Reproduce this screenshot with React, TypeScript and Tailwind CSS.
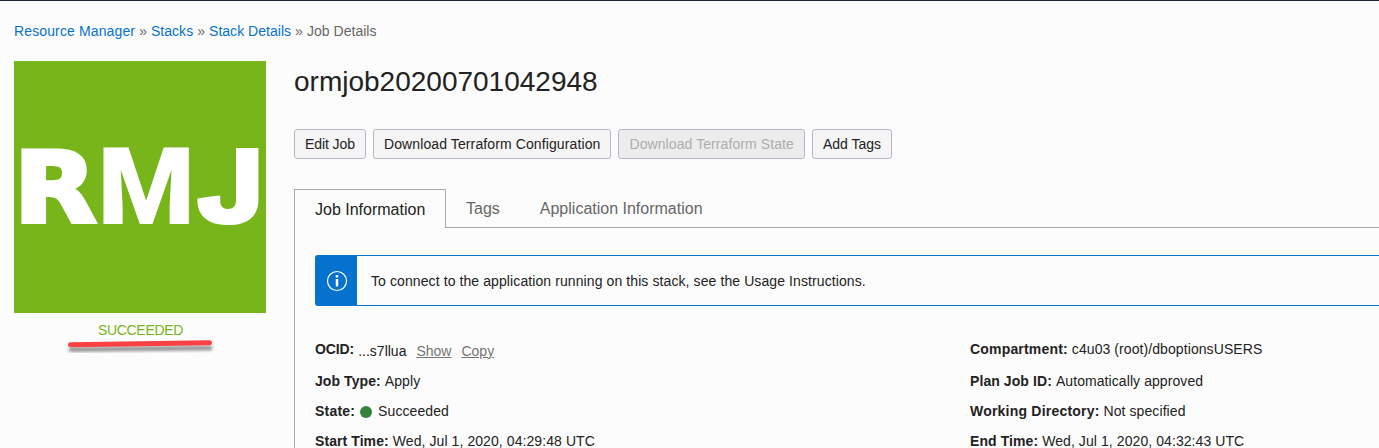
import type { ReactNode } from 'react';

function Crumb({ children }: { children: ReactNode }) {
  return <a className="text-[#0572ce]">{children}</a>;
}

function Button({
  children,
  disabled = false,
  spacing = 'tracking-[0.09px]',
}: {
  children: ReactNode;
  disabled?: boolean;
  spacing?: string;
}) {
  return (
    <button
      disabled={disabled}
      className={
        'flex h-[30px] items-center rounded-[3px] border border-[#b4bac4] px-[10px] pb-px whitespace-nowrap ' +
        spacing +
        (disabled ? ' bg-[#ececec] text-[#adadad]' : ' bg-[#f5f5f5] text-[#222]')
      }
    >
      {children}
    </button>
  );
}

function Field({ label, spacing = 'tracking-[0.08px]', children }: { label: string; spacing?: string; children: ReactNode }) {
  return (
    <div className="flex h-[30px] items-center gap-1 tracking-[0.08px] whitespace-nowrap">
      <span className={'font-bold ' + spacing}>{label}:</span>
      {children}
    </div>
  );
}

function JobLogo() {
  return (
    <svg className="size-[252px] bg-[#78b51a]" viewBox="0 0 252 252" role="img">
      <defs>
        <clipPath id="hook">
          <path d="M180 138L207 134V80H252V175H180Z" />
        </clipPath>
      </defs>
      <g fill="#fff">
        <text
          transform="translate(-0.2 161) scale(1.09 1)"
          fontFamily="DejaVu Sans, sans-serif"
          fontWeight="700"
          fontSize="98.8"
          stroke="#fff"
          strokeWidth="4"
        >
          R
        </text>
        <text transform="translate(83.500 163) scale(1.04 1)" fontFamily="Roboto, sans-serif" fontWeight="900" fontSize="106.900">
          M
        </text>
        <g clipPath="url(#hook)">
          <text transform="translate(181.300 163) scale(1.1 1)" fontFamily="Inter, sans-serif" fontWeight="900" fontSize="104.500">
            J
          </text>
        </g>
      </g>
    </svg>
  );
}

export default function App() {
  return (
    <div className="h-[448px] w-full overflow-hidden border-t border-[#1c2536] bg-[#fcfcfc] font-['Liberation_Sans',Arial,sans-serif] text-[14px] leading-5 text-[#222]">
      <nav className="flex gap-1 pt-5 pl-[14px] tracking-[0.03px] whitespace-nowrap text-[#666]">
        <span className="tracking-[0.13px]">
          <Crumb>Resource Manager</Crumb>
        </span>
        <span>»</span>
        <Crumb>Stacks</Crumb>
        <span>»</span>
        <Crumb>Stack Details</Crumb>
        <span>»</span>
        <span>Job Details</span>
      </nav>

      <div className="flex pt-5 pl-[14px]">
        <aside className="flex w-[280px] shrink-0 flex-col">
          <JobLogo />
          <div className="w-[253px] pt-[7px] text-center tracking-[-0.3px] text-[#78b51a]">SUCCEEDED</div>
          <svg className="ml-[48px] h-[20px] w-[160px]" viewBox="0 0 160 20">
            <defs>
              <filter id="soft" x="-10%" y="-200%" width="120%" height="500%">
                <feGaussianBlur stdDeviation="1.5" />
              </filter>
            </defs>
            <path d="M9 9.5L148 8" stroke="#777" strokeWidth="5" strokeLinecap="round" filter="url(#soft)" opacity=".75" />
            <path d="M8.500 4.800L147.500 2.800" stroke="#fb4143" strokeWidth="5" strokeLinecap="round" />
          </svg>
        </aside>

        <main className="min-w-0 flex-1">
          <h1 className="pt-[5px] text-[28px] leading-8">ormjob20200701042948</h1>
          <div className="mt-[31px] flex gap-[7px]">
            <Button spacing="tracking-[-0.08px]">Edit Job</Button>
            <Button spacing="tracking-[0.11px]">Download Terraform Configuration</Button>
            <Button disabled>Download Terraform State</Button>
            <Button spacing="tracking-normal">Add Tags</Button>
          </div>

          <div className="mt-[30px] flex h-[39px] text-[16px] whitespace-nowrap text-[#666]">
            <div className="flex w-[152px] items-center border-t border-r border-l border-[#a9a9a9] pt-[2px] pl-[20px] text-[#222]">
              Job Information
            </div>
            <div className="flex flex-1 items-center gap-10 border-b border-[#a9a9a9] pt-[2px] pl-5">
              <span>Tags</span>
              <span>Application Information</span>
            </div>
          </div>

          <section className="h-[240px] border-l border-[#a9a9a9] pt-[27px] pl-5">
            <div className="flex h-[51px] items-center rounded-l-[3px] border-y border-l border-[#0572ce]">
              <div className="flex h-full w-[41px] items-center justify-center bg-[#0572ce]">
                <svg className="size-[22px]" viewBox="0 0 22 22" fill="none" stroke="#fff">
                  <circle cx="11" cy="11" r="9.500" strokeWidth="1.200" />
                  <path d="M11 9V16.500" strokeWidth="2.500" />
                  <path d="M11 5V7.500" strokeWidth="2.500" />
                </svg>
              </div>
              <span className="pl-[14px] tracking-[0.095px]">
                To connect to the application running on this stack, see the Usage Instructions.
              </span>
            </div>

            <div className="grid grid-cols-[655px_1fr] pt-[28px]">
              <div>
                <div className="pb-[2px]">
                  <Field label="OCID" spacing="tracking-[-0.1px]">
                    <span className="pt-[3px] tracking-normal">
                      ...s7llua
                      <a className="ml-[10px] text-[#757575] underline">Show</a>
                      <a className="ml-[10px] text-[#757575] underline">Copy</a>
                    </span>
                  </Field>
                </div>
                <Field label="Job Type">Apply</Field>
                <Field label="State" spacing="tracking-[0.2px]">
                  <span className="mt-px mr-[2px] ml-px size-3 rounded-full bg-[#33843a]" />
                  Succeeded
                </Field>
                <Field label="Start Time">Wed, Jul 1, 2020, 04:29:48 UTC</Field>
              </div>
              <div>
                <div className="pb-[2px]">
                  <Field label="Compartment" spacing="tracking-[0.18px]">
                    c4u03 (root)/dboptionsUSERS
                  </Field>
                </div>
                <Field label="Plan Job ID">Automatically approved</Field>
                <Field label="Working Directory" spacing="tracking-[0.21px]">
                  Not specified
                </Field>
                <Field label="End Time">Wed, Jul 1, 2020, 04:32:43 UTC</Field>
              </div>
            </div>
          </section>
        </main>
      </div>
    </div>
  );
}
